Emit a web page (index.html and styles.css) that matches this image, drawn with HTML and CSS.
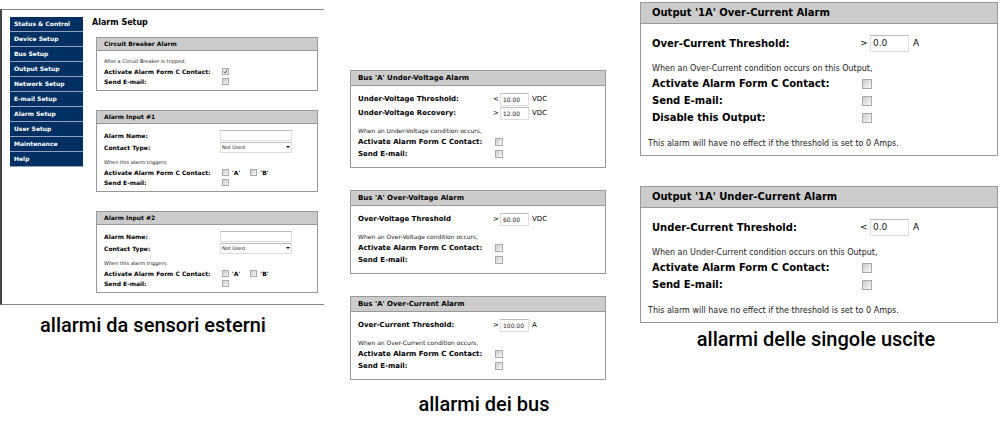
FILE: index.html
```html
<!DOCTYPE html>
<html lang="it">
<head>
    <meta charset="UTF-8">
    <meta name="viewport" content="width=device-width, initial-scale=1.0">
    <title>Alarm Setup</title>
    <link rel="stylesheet" href="styles.css">
</head>
<body>
    <div class="container">
        <section class="column sensors">
            <div class="page">
                <nav class="menu">
                    <a href="#status">Status &amp; Control</a>
                    <a href="#device">Device Setup</a>
                    <a href="#bus">Bus Setup</a>
                    <a href="#output">Output Setup</a>
                    <a href="#network">Network Setup</a>
                    <a href="#email">E-mail Setup</a>
                    <a href="#alarm">Alarm Setup</a>
                    <a href="#user">User Setup</a>
                    <a href="#maintenance">Maintenance</a>
                    <a href="#help">Help</a>
                </nav>
                <main class="content">
                    <h1>Alarm Setup</h1>

                    <form class="panel">
                        <h2>Circuit Breaker Alarm</h2>
                        <div class="panel-body">
                            <p class="note">After a Circuit Breaker is tripped,</p>
                            <div class="row">
                                <label for="cb-contact">Activate Alarm Form C Contact:</label>
                                <div class="checks"><input type="checkbox" id="cb-contact" checked></div>
                            </div>
                            <div class="row">
                                <label for="cb-email">Send E-mail:</label>
                                <div class="checks"><input type="checkbox" id="cb-email"></div>
                            </div>
                        </div>
                    </form>

                    <form class="panel">
                        <h2>Alarm Input #1</h2>
                        <div class="panel-body">
                            <div class="row field">
                                <label for="in1-name">Alarm Name:</label>
                                <input type="text" id="in1-name" class="name">
                            </div>
                            <div class="row field">
                                <label for="in1-type">Contact Type:</label>
                                <select id="in1-type"><option>Not Used</option></select>
                            </div>
                            <p class="note">When this alarm triggers,</p>
                            <div class="row">
                                <span class="label">Activate Alarm Form C Contact:</span>
                                <div class="checks">
                                    <label><input type="checkbox"> 'A'</label>
                                    <label><input type="checkbox"> 'B'</label>
                                </div>
                            </div>
                            <div class="row">
                                <label for="in1-email">Send E-mail:</label>
                                <div class="checks"><input type="checkbox" id="in1-email"></div>
                            </div>
                        </div>
                    </form>

                    <form class="panel">
                        <h2>Alarm Input #2</h2>
                        <div class="panel-body">
                            <div class="row field">
                                <label for="in2-name">Alarm Name:</label>
                                <input type="text" id="in2-name" class="name">
                            </div>
                            <div class="row field">
                                <label for="in2-type">Contact Type:</label>
                                <select id="in2-type"><option>Not Used</option></select>
                            </div>
                            <p class="note">When this alarm triggers,</p>
                            <div class="row">
                                <span class="label">Activate Alarm Form C Contact:</span>
                                <div class="checks">
                                    <label><input type="checkbox"> 'A'</label>
                                    <label><input type="checkbox"> 'B'</label>
                                </div>
                            </div>
                            <div class="row">
                                <label for="in2-email">Send E-mail:</label>
                                <div class="checks"><input type="checkbox" id="in2-email"></div>
                            </div>
                        </div>
                    </form>
                </main>
            </div>
            <p class="caption">allarmi da sensori esterni</p>
        </section>

        <section class="column bus">
            <form class="panel">
                <h2>Bus 'A' Under-Voltage Alarm</h2>
                <div class="panel-body">
                    <div class="row field">
                        <label for="uv-threshold">Under-Voltage Threshold:</label>
                        <div class="value"><span class="sign">&lt;</span><input type="text" id="uv-threshold" value="10.00"><span>VDC</span></div>
                    </div>
                    <div class="row field">
                        <label for="uv-recovery">Under-Voltage Recovery:</label>
                        <div class="value"><span class="sign">&gt;</span><input type="text" id="uv-recovery" value="12.00"><span>VDC</span></div>
                    </div>
                    <p class="note">When an Under-Voltage condition occurs,</p>
                    <div class="row">
                        <label for="uv-contact">Activate Alarm Form C Contact:</label>
                        <div class="checks"><input type="checkbox" id="uv-contact"></div>
                    </div>
                    <div class="row">
                        <label for="uv-email">Send E-mail:</label>
                        <div class="checks"><input type="checkbox" id="uv-email"></div>
                    </div>
                </div>
            </form>

            <form class="panel">
                <h2>Bus 'A' Over-Voltage Alarm</h2>
                <div class="panel-body">
                    <div class="row field">
                        <label for="ov-threshold">Over-Voltage Threshold</label>
                        <div class="value"><span class="sign">&gt;</span><input type="text" id="ov-threshold" value="60.00"><span>VDC</span></div>
                    </div>
                    <p class="note">When an Over-Voltage condition occurs,</p>
                    <div class="row">
                        <label for="ov-contact">Activate Alarm Form C Contact:</label>
                        <div class="checks"><input type="checkbox" id="ov-contact"></div>
                    </div>
                    <div class="row">
                        <label for="ov-email">Send E-mail:</label>
                        <div class="checks"><input type="checkbox" id="ov-email"></div>
                    </div>
                </div>
            </form>

            <form class="panel">
                <h2>Bus 'A' Over-Current Alarm</h2>
                <div class="panel-body">
                    <div class="row field">
                        <label for="oc-threshold">Over-Current Threshold:</label>
                        <div class="value"><span class="sign">&gt;</span><input type="text" id="oc-threshold" value="100.00"><span>A</span></div>
                    </div>
                    <p class="note">When an Over-Current condition occurs,</p>
                    <div class="row">
                        <label for="oc-contact">Activate Alarm Form C Contact:</label>
                        <div class="checks"><input type="checkbox" id="oc-contact"></div>
                    </div>
                    <div class="row">
                        <label for="oc-email">Send E-mail:</label>
                        <div class="checks"><input type="checkbox" id="oc-email"></div>
                    </div>
                </div>
            </form>
            <p class="caption">allarmi dei bus</p>
        </section>

        <section class="column outputs">
            <form class="panel">
                <h2>Output '1A' Over-Current Alarm</h2>
                <div class="panel-body">
                    <div class="row field">
                        <label for="out-over">Over-Current Threshold:</label>
                        <div class="value"><span class="sign">&gt;</span><input type="text" id="out-over" value="0.0"><span>A</span></div>
                    </div>
                    <p class="note">When an Over-Current condition occurs on this Output,</p>
                    <div class="row">
                        <label for="out-over-contact">Activate Alarm Form C Contact:</label>
                        <div class="checks"><input type="checkbox" id="out-over-contact"></div>
                    </div>
                    <div class="row">
                        <label for="out-over-email">Send E-mail:</label>
                        <div class="checks"><input type="checkbox" id="out-over-email"></div>
                    </div>
                    <div class="row">
                        <label for="out-over-disable">Disable this Output:</label>
                        <div class="checks"><input type="checkbox" id="out-over-disable"></div>
                    </div>
                </div>
                <p class="hint">This alarm will have no effect if the threshold is set to 0 Amps.</p>
            </form>

            <form class="panel">
                <h2>Output '1A' Under-Current Alarm</h2>
                <div class="panel-body">
                    <div class="row field">
                        <label for="out-under">Under-Current Threshold:</label>
                        <div class="value"><span class="sign">&lt;</span><input type="text" id="out-under" value="0.0"><span>A</span></div>
                    </div>
                    <p class="note">When an Under-Current condition occurs on this Output,</p>
                    <div class="row">
                        <label for="out-under-contact">Activate Alarm Form C Contact:</label>
                        <div class="checks"><input type="checkbox" id="out-under-contact"></div>
                    </div>
                    <div class="row">
                        <label for="out-under-email">Send E-mail:</label>
                        <div class="checks"><input type="checkbox" id="out-under-email"></div>
                    </div>
                </div>
                <p class="hint">This alarm will have no effect if the threshold is set to 0 Amps.</p>
            </form>
            <p class="caption">allarmi delle singole uscite</p>
        </section>
    </div>
</body>
</html>
```
FILE: styles.css
```css
* {
    box-sizing: border-box;
}

body {
    margin: 0;
    background: #ffffff;
    color: #000000;
    font-family: Verdana, "DejaVu Sans", sans-serif;
}

h1, h2, p {
    margin: 0;
}

.container {
    display: grid;
    grid-template-columns: 324fr 282fr 394fr;
    align-items: start;
}

/* each column has its own scale */
.sensors {
    --text: 6px;
    --note: 5px;
    --row: 10px;
    --field: 12px;
    --head: 12px;
    --pad: 7px;
    --label: 116px;
    --box: 7px;
    --gap: 19px;
    padding-top: 9px;
}

.bus {
    --text: 7px;
    --note: 6px;
    --row: 12px;
    --field: 14px;
    --head: 14px;
    --pad: 7px;
    --label: 135px;
    --box: 8px;
    --gap: 22px;
    padding: 70px 0 0 26px;
}

.outputs {
    --text: 10px;
    --note: 8px;
    --row: 17px;
    --field: 18px;
    --head: 20px;
    --pad: 11px;
    --label: 208px;
    --box: 10px;
    --gap: 30px;
    padding: 2px 2px 0 34px;
}

.page {
    display: flex;
    gap: 9px;
    padding: 7px 6px 11px 8px;
    border-top: 1px solid #888888;
    border-bottom: 1px solid #888888;
    border-left: 2px solid #444444;
}

.menu {
    flex: 0 0 73px;
}

.menu a {
    display: block;
    padding-left: 4px;
    border-bottom: 1px solid #8fa3c0;
    background: #003063;
    color: #ffffff;
    font-size: 6px;
    font-weight: bold;
    line-height: 14px;
    text-decoration: none;
}

.content {
    flex: 1;
}

h1 {
    margin-bottom: 8px;
    font-size: 8px;
    line-height: 12px;
}

.content .panel {
    margin-left: 4px;
}

.panel {
    border: 1px solid #999999;
}

.panel + .panel {
    margin-top: var(--gap);
}

.panel h2 {
    padding-left: var(--pad);
    border-bottom: 1px solid #999999;
    background: #cccccc;
    font-size: var(--text);
    line-height: var(--head);
}

.panel-body {
    padding: 5px 0 4px var(--pad);
}

.row {
    display: grid;
    grid-template-columns: var(--label) 1fr;
    align-items: center;
    height: var(--row);
    font-size: var(--text);
}

.row > label,
.label {
    font-weight: bold;
    white-space: nowrap;
}

.field {
    height: var(--field);
}

.note,
.hint {
    color: #222222;
    font-size: var(--note);
    line-height: 10px;
}

.field + .note {
    margin-top: 4px;
}

.checks {
    display: flex;
    gap: 10px;
    padding-left: 2px;
    font-weight: bold;
}

.checks label {
    display: flex;
    align-items: center;
    gap: 3px;
}

input,
select {
    margin: 0;
    border: 1px solid #dddddd;
    border-top-color: #bbbbbb;
    border-radius: 0;
    background: #ffffff;
    color: #222222;
    font-family: inherit;
    font-size: var(--note);
}

input[type=checkbox] {
    width: var(--box);
    height: var(--box);
    border: 1px solid #aaaaaa;
    background: linear-gradient(135deg, #cccccc, #f8f8f8);
    appearance: none;
}

input[type=checkbox]:checked {
    background: #eeeeee url("data:image/svg+xml,%3Csvg xmlns='http://www.w3.org/2000/svg' viewBox='0 0 8 8'%3E%3Cpath d='M1.5 4l2 2.5L6.5 1' fill='none' stroke='%23333355' stroke-width='1.3'/%3E%3C/svg%3E") center / contain;
}

.name,
select {
    width: 72px;
    height: 11px;
    padding: 0 1px;
}

select {
    appearance: none;
    background: url("data:image/svg+xml,%3Csvg xmlns='http://www.w3.org/2000/svg' viewBox='0 0 4 2'%3E%3Cpath d='M0 0h4L2 2z'/%3E%3C/svg%3E") right 1px center / 4px 2px no-repeat;
}

.value {
    display: flex;
    align-items: center;
}

.value .sign {
    width: 7px;
}

.value input {
    width: 29px;
    height: 13px;
    margin-right: 3px;
    padding: 0 2px;
}

.bus .panel-body {
    padding: 6px 0 7px var(--pad);
}

.bus .field + .note {
    margin-top: 6px;
}

.outputs .panel-body {
    padding-top: 10px;
}

.outputs .value {
    font-size: 9px;
}

.outputs .value .sign {
    width: 10px;
}

.outputs .value input {
    width: 39px;
    height: 17px;
    margin-right: 4px;
    font-size: 9px;
}

.outputs .field + .note {
    margin: 12px 0 1px;
}

.hint {
    padding: 9px 0 6px 7px;
}

.caption {
    font-family: "Franklin Gothic Medium", Roboto, sans-serif;
    font-size: 20px;
    font-weight: 500;
    line-height: 24px;
    text-align: center;
    white-space: nowrap;
}

.sensors .caption {
    padding: 8px 18px 0 0;
}

.bus .caption {
    padding: 12px 0 0 12px;
}

.outputs .caption {
    padding: 4px 6px 0 0;
}
```
